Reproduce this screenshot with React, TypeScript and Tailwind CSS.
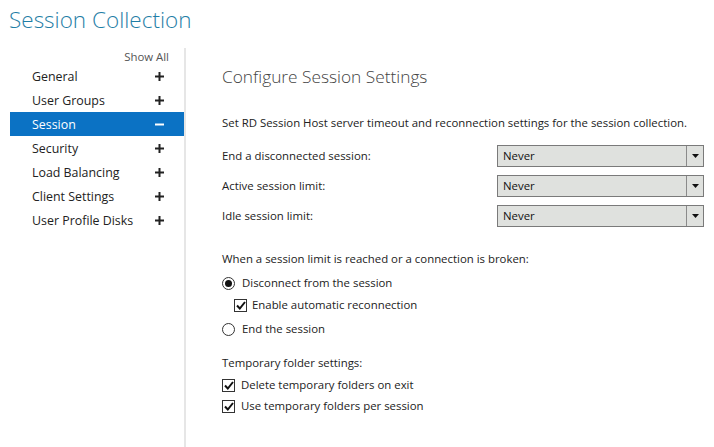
import React from 'react';

const navItems = ['General', 'User Groups', 'Session', 'Security', 'Load Balancing', 'Client Settings', 'User Profile Disks'];

const Plus = () => (
    <svg width="9" height="9" viewBox="0 0 9 9" className="shrink-0">
        <path d="M4.5 0v9M0 4.5h9" stroke="#222" strokeWidth="2" />
    </svg>
);

const Minus = () => (
    <svg width="9" height="9" viewBox="0 0 9 9" className="shrink-0">
        <path d="M0 4.5h9" stroke="#fff" strokeWidth="2" />
    </svg>
);

const Dropdown = () => (
    <div className="flex h-[22px] w-[207px] border border-[#7a7a7a] bg-[#dfe1de]">
        <div className="flex-1 pl-[5px] leading-[20px] text-[#111]">Never</div>
        <div className="flex w-[17px] items-center justify-center border-l border-[#8a8a8a]">
            <svg width="7" height="4" viewBox="0 0 7 4">
                <path d="M0 0h7L3.5 4z" fill="#111" />
            </svg>
        </div>
    </div>
);

const Checkbox = () => (
    <div className="flex h-[13px] w-[13px] items-center justify-center border border-[#333] bg-white">
        <svg width="10" height="9" viewBox="0 0 10 9">
            <path d="M1 4.5l2.8 3L9 1" fill="none" stroke="#111" strokeWidth="2" />
        </svg>
    </div>
);

const Radio = ({ checked }: { checked?: boolean }) => (
    <div className="flex h-[13px] w-[13px] items-center justify-center rounded-full border border-[#333] bg-white">
        {checked && <div className="h-[7px] w-[7px] rounded-full bg-[#111]" />}
    </div>
);

const App = () => {
    return (
        <div
            className="h-[447px] w-[714px] overflow-hidden bg-white text-[11.4px] leading-[16px] text-[#222]"
            style={{ fontFamily: '"Open Sans", "Noto Sans", sans-serif' }}
        >
            {/* Title */}
            <h1 className="h-[48px] pl-[9px] pt-[4px] text-[22.5px] font-light leading-[32px] text-[#1f7ea6]">
                Session Collection
            </h1>

            <div className="flex h-[399px]">
                {/* Sidebar */}
                <div className="w-[184px] shrink-0 pl-[10px]">
                    <div className="h-[16px] pr-[15px] text-right text-[11.4px] leading-[18px] text-[#555]">Show All</div>
                    <ul>
                        {navItems.map((item) => {
                            const active = item === 'Session';
                            return (
                                <li
                                    key={item}
                                    className={`flex h-[24px] items-center justify-between pl-[22px] pr-[20px] text-[12.4px] leading-[24px] ${
                                        active ? 'bg-[#0b72c4] text-white' : 'text-[#222]'
                                    }`}
                                >
                                    <span className="pt-[1px]">{item}</span>
                                    {active ? <Minus /> : <Plus />}
                                </li>
                            );
                        })}
                    </ul>
                </div>
                <div className="w-[2px] shrink-0 bg-[#e6e6e6]" />

                {/* Main */}
                <div className="flex-1 pl-[36px]">
                    <h2 className="mt-[17px] text-[17.3px] font-light leading-[24px] text-[#444]">Configure Session Settings</h2>

                    <p className="mt-[26px]">
                        Set RD Session Host server timeout and reconnection settings for the session collection.
                    </p>

                    <div className="mt-[14px] flex flex-col gap-[8px] pr-[10px]">
                        {['End a disconnected session:', 'Active session limit:', 'Idle session limit:'].map((label) => (
                            <div key={label} className="flex items-center justify-between">
                                <span>{label}</span>
                                <Dropdown />
                            </div>
                        ))}
                    </div>

                    <p className="mt-[24px]">When a session limit is reached or a connection is broken:</p>
                    <div className="mt-[8px] flex items-center gap-[7px]">
                        <Radio checked />
                        <span>Disconnect from the session</span>
                    </div>
                    <div className="mt-[6px] ml-[12px] flex items-center gap-[5px]">
                        <Checkbox />
                        <span>Enable automatic reconnection</span>
                    </div>
                    <div className="mt-[8px] flex items-center gap-[7px]">
                        <Radio />
                        <span>End the session</span>
                    </div>

                    <p className="mt-[18px]">Temporary folder settings:</p>
                    <div className="mt-[6px] flex items-center gap-[6px]">
                        <Checkbox />
                        <span>Delete temporary folders on exit</span>
                    </div>
                    <div className="mt-[5px] flex items-center gap-[6px]">
                        <Checkbox />
                        <span>Use temporary folders per session</span>
                    </div>
                </div>
            </div>
        </div>
    );
};

export default App;
